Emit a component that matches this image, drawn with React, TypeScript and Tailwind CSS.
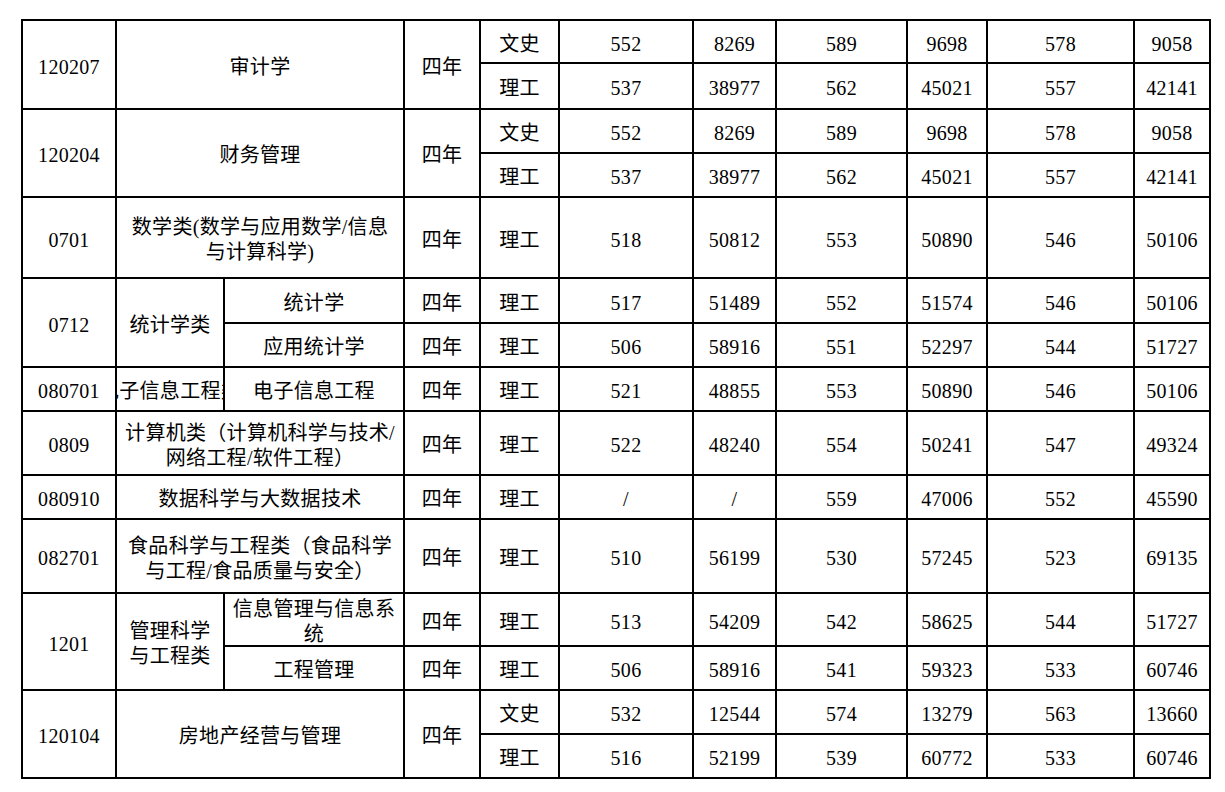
import React from "react";

type CellProps = { children?: React.ReactNode; className?: string };

function Cell({ children, className = "" }: CellProps) {
  return (
    <div className={`bg-white flex items-center justify-center text-center leading-[25px] pt-[5px] ${className}`}>
      {children}
    </div>
  );
}

// 类别 + 6 score columns
function Scores({ kind, values }: { kind: string; values: string[] }) {
  return (
    <>
      <Cell>{kind}</Cell>
      {values.map((v, i) => (
        <Cell key={i}>{v}</Cell>
      ))}
    </>
  );
}

export default function App() {
  return (
    <div className="min-h-screen bg-white pt-[19px] pl-[21px] text-black font-['Liberation_Serif','Noto_Sans_CJK_SC',serif] text-[20px] tracking-[0.3px]">
      <div
        className="
          inline-grid
          bg-black
          p-[2px]
          gap-[2px]
          grid-cols-[92px_106px_178px_74px_77px_132px_81px_129px_78px_145px_74px]
          grid-rows-[41px_44px_42px_42px_79px_43px_42px_42px_62px_42px_72px_51px_42px_42px_42px]
        "
      >
        {/* 120207 */}
        <Cell className="row-span-2">120207</Cell>
        <Cell className="row-span-2 col-span-2">审计学</Cell>
        <Cell className="row-span-2">四年</Cell>
        <Scores kind="文史" values={["552", "8269", "589", "9698", "578", "9058"]} />
        <Scores kind="理工" values={["537", "38977", "562", "45021", "557", "42141"]} />

        {/* 120204 */}
        <Cell className="row-span-2">120204</Cell>
        <Cell className="row-span-2 col-span-2">财务管理</Cell>
        <Cell className="row-span-2">四年</Cell>
        <Scores kind="文史" values={["552", "8269", "589", "9698", "578", "9058"]} />
        <Scores kind="理工" values={["537", "38977", "562", "45021", "557", "42141"]} />

        {/* 0701 */}
        <Cell>0701</Cell>
        <Cell className="col-span-2">
          数学类(数学与应用数学/信息
          <br />
          与计算科学)
        </Cell>
        <Cell>四年</Cell>
        <Scores kind="理工" values={["518", "50812", "553", "50890", "546", "50106"]} />

        {/* 0712 */}
        <Cell className="row-span-2">0712</Cell>
        <Cell className="row-span-2">统计学类</Cell>
        <Cell>统计学</Cell>
        <Cell>四年</Cell>
        <Scores kind="理工" values={["517", "51489", "552", "51574", "546", "50106"]} />
        <Cell>应用统计学</Cell>
        <Cell>四年</Cell>
        <Scores kind="理工" values={["506", "58916", "551", "52297", "544", "51727"]} />

        {/* 080701 - name overflows its cell in the source, clipped on both sides */}
        <Cell>080701</Cell>
        <Cell className="overflow-hidden whitespace-nowrap">电子信息工程类</Cell>
        <Cell>电子信息工程</Cell>
        <Cell>四年</Cell>
        <Scores kind="理工" values={["521", "48855", "553", "50890", "546", "50106"]} />

        {/* 0809 */}
        <Cell>0809</Cell>
        <Cell className="col-span-2">
          计算机类（计算机科学与技术/
          <br />
          网络工程/软件工程）
        </Cell>
        <Cell>四年</Cell>
        <Scores kind="理工" values={["522", "48240", "554", "50241", "547", "49324"]} />

        {/* 080910 */}
        <Cell>080910</Cell>
        <Cell className="col-span-2">数据科学与大数据技术</Cell>
        <Cell>四年</Cell>
        <Scores kind="理工" values={["/", "/", "559", "47006", "552", "45590"]} />

        {/* 082701 */}
        <Cell>082701</Cell>
        <Cell className="col-span-2">
          食品科学与工程类（食品科学
          <br />
          与工程/食品质量与安全）
        </Cell>
        <Cell>四年</Cell>
        <Scores kind="理工" values={["510", "56199", "530", "57245", "523", "69135"]} />

        {/* 1201 */}
        <Cell className="row-span-2">1201</Cell>
        <Cell className="row-span-2">
          管理科学
          <br />
          与工程类
        </Cell>
        <Cell>
          信息管理与信息系
          <br />
          统
        </Cell>
        <Cell>四年</Cell>
        <Scores kind="理工" values={["513", "54209", "542", "58625", "544", "51727"]} />
        <Cell>工程管理</Cell>
        <Cell>四年</Cell>
        <Scores kind="理工" values={["506", "58916", "541", "59323", "533", "60746"]} />

        {/* 120104 */}
        <Cell className="row-span-2">120104</Cell>
        <Cell className="row-span-2 col-span-2">房地产经营与管理</Cell>
        <Cell className="row-span-2">四年</Cell>
        <Scores kind="文史" values={["532", "12544", "574", "13279", "563", "13660"]} />
        <Scores kind="理工" values={["516", "52199", "539", "60772", "533", "60746"]} />
      </div>
    </div>
  );
}
